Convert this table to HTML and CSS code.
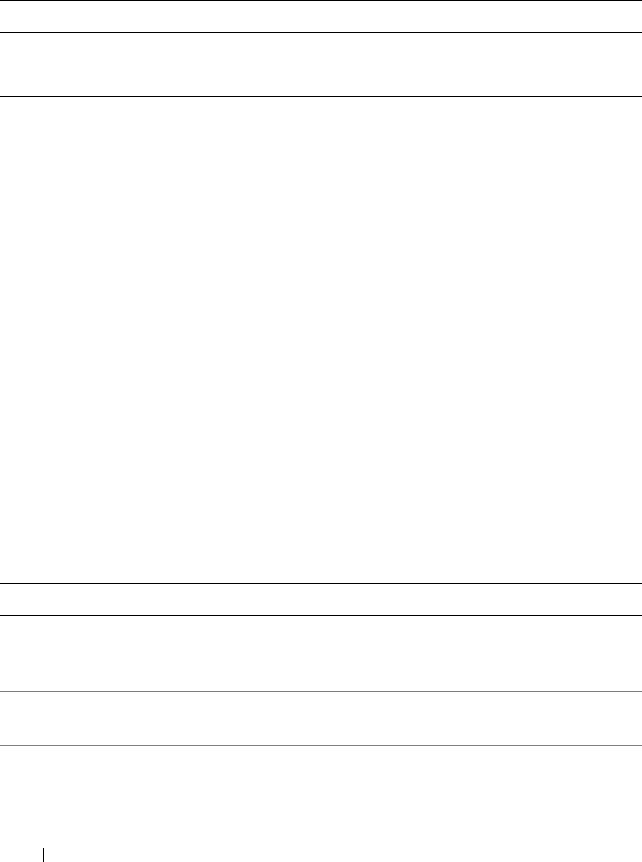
FILE: index.html
```
<!DOCTYPE html>
<html>
<head>
<meta charset="utf-8">
<link rel="stylesheet" href="styles.css">
</head>
<body>
<div class="page">
  <div class="table">
    <div class="row head"></div>
    <div class="row body-main"></div>
    <div class="row body-long"></div>
  </div>
  <div class="table second">
    <div class="row head"></div>
    <div class="row cell-a"></div>
    <div class="row cell-b"></div>
  </div>
  <div class="footer"><span class="footer-bar"></span></div>
</div>
</body>
</html>
```
FILE: styles.css
```
html, body {
  margin: 0;
  padding: 0;
  background: #fff;
  font-family: "Liberation Sans", Arial, sans-serif;
}
.page {
  width: 642px;
  height: 862px;
  overflow: hidden;
}
.table {
  border-top: 1px solid #000;
}
.row {
  border-bottom: 1px solid #000;
}
.head { height: 31px; }
.body-main { height: 63px; }
.body-long { height: 486px; }
.table.second { border-top: none; }
.cell-a { height: 75px; border-bottom-color: #808080; }
.cell-b { height: 53px; border-bottom-color: #808080; }
.footer {
  padding-top: 102px;
  padding-left: 43px;
}
.footer-bar {
  display: block;
  width: 1px;
  height: 14px;
  background: #000;
}
```
